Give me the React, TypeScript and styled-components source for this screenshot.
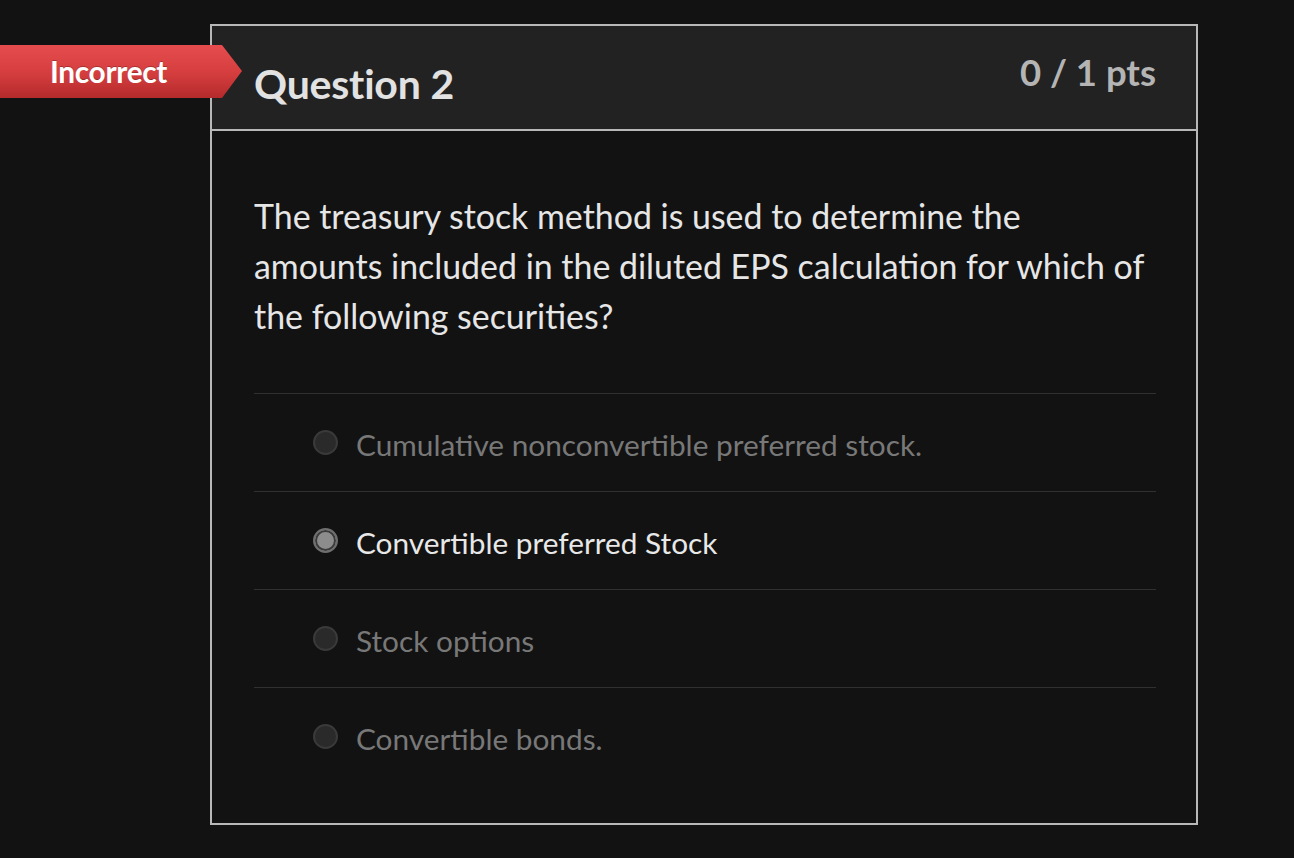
import React from 'react'
import styled, { createGlobalStyle } from 'styled-components'

const GlobalStyle = createGlobalStyle`
  html, body {
    margin: 0;
    padding: 0;
    background: #121212;
    font-family: Lato, "Noto Sans", sans-serif;
  }
`

const Page = styled.div`
  position: relative;
  width: 1294px;
  height: 858px;
  padding: 24px 0 0 210px;
  box-sizing: border-box;
`

const Badge = styled.div`
  position: absolute;
  left: 0;
  top: 45px;
  width: 242px;
  height: 53px;
  background: linear-gradient(#e64c4e, #d43d3e 55%, #b42a2b);
  clip-path: polygon(0 0, 222px 0, 242px 26px, 222px 53px, 0 53px);
  color: #fff;
  font-size: 29.8px;
  font-weight: 700;
  display: flex;
  align-items: center;
  padding-left: 50px;
  box-sizing: border-box;
  letter-spacing: -0.3px;
  text-shadow: 0 -1px 0 rgba(0, 0, 0, 0.25);
`

const Card = styled.div`
  width: 988px;
  border: 2px solid #b8b8b8;
  box-sizing: border-box;
  background: #121212;
`

const Header = styled.div`
  display: flex;
  justify-content: space-between;
  align-items: flex-start;
  height: 105px;
  box-sizing: border-box;
  background: #222;
  border-bottom: 2px solid #b8b8b8;
  padding: 0 40px 0 42px;
`

const Title = styled.h2`
  margin: 33px 0 0;
  font-size: 41px;
  font-weight: 700;
  line-height: 1.2;
  color: #e2e2e2;
  letter-spacing: -0.2px;
`

const Points = styled.div`
  margin-top: 25px;
  font-size: 36.5px;
  font-weight: 700;
  line-height: 1.2;
  color: #b4b4b4;
`

const Body = styled.div`
  padding: 60px 40px 38px 42px;
`

const Prompt = styled.p`
  margin: 0 0 52px;
  max-width: 896px;
  font-size: 33.9px;
  line-height: 50px;
  color: #e6e6e6;
`

const Answer = styled.div<{ $selected?: boolean }>`
  display: flex;
  align-items: center;
  gap: 18px;
  height: 98px;
  box-sizing: border-box;
  border-top: 1px solid #303030;
  padding: 3px 0 0 59px;
  font-size: 29.8px;
  color: ${p => (p.$selected ? '#e8e8e8' : '#787878')};
`

const Radio = styled.span<{ $selected?: boolean }>`
  width: 21px;
  height: 21px;
  margin-top: -3px;
  border-radius: 50%;
  border: 2px solid ${p => (p.$selected ? '#6e6e6e' : '#3a3a3a')};
  background: ${p => (p.$selected ? '#8c8c8c' : '#2a2a2a')};
  box-shadow: ${p => (p.$selected ? 'inset 0 0 0 2px #3a3a3a' : 'none')};
  flex-shrink: 0;
`

const answers = [
  { text: 'Cumulative nonconvertible preferred stock.', selected: false },
  { text: 'Convertible preferred Stock', selected: true },
  { text: 'Stock options', selected: false },
  { text: 'Convertible bonds.', selected: false },
]

export default function App() {
  return (
    <>
      <GlobalStyle />
      <Page>
        <Badge>Incorrect</Badge>
        <Card>
          <Header>
            <Title>Question 2</Title>
            <Points>0 / 1 pts</Points>
          </Header>
          <Body>
            <Prompt>
              The treasury stock method is used to determine the amounts included in the diluted EPS
              calculation for which of the following securities?
            </Prompt>
            {answers.map(a => (
              <Answer key={a.text} $selected={a.selected}>
                <Radio $selected={a.selected} />
                {a.text}
              </Answer>
            ))}
          </Body>
        </Card>
      </Page>
    </>
  )
}
